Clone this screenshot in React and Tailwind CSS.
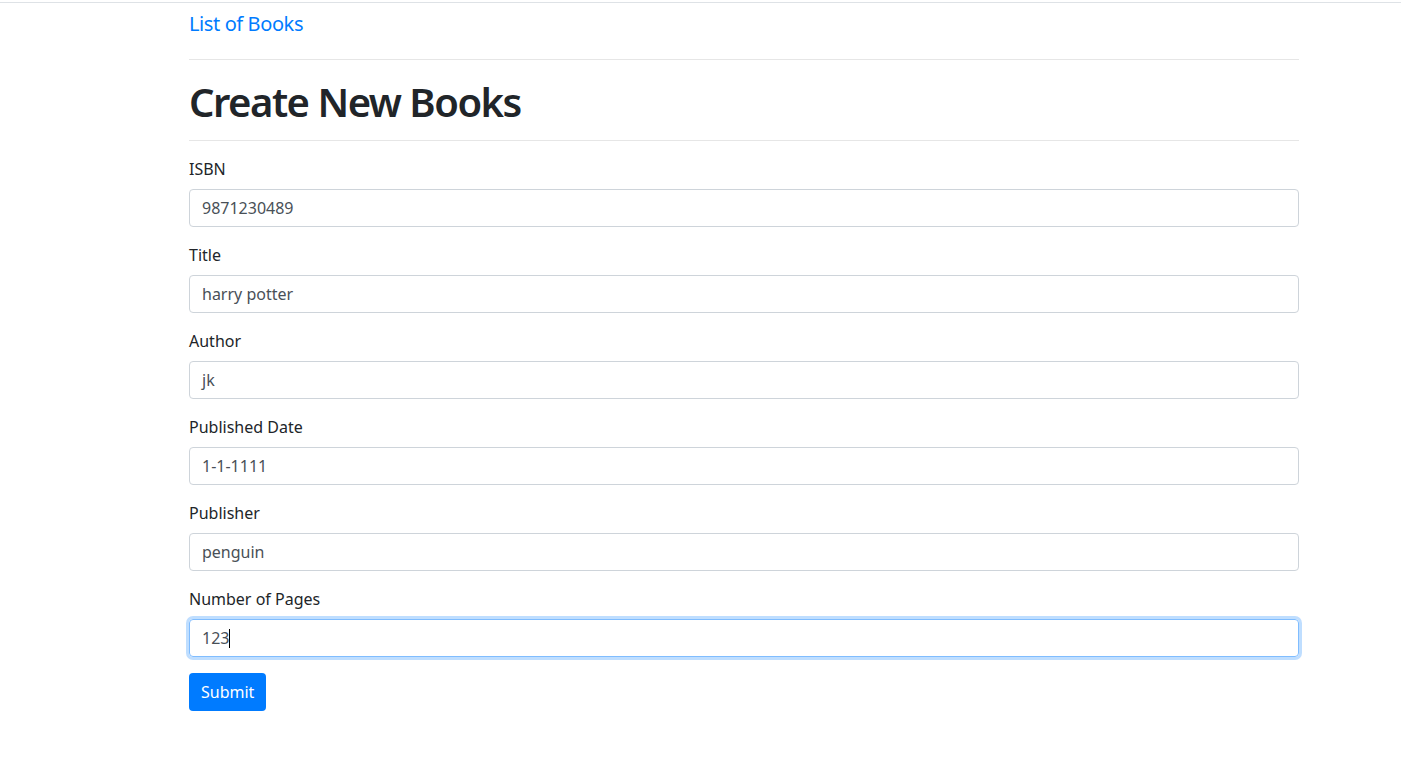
import React from "react";

const fields = [
  { label: "ISBN", value: "9871230489" },
  { label: "Title", value: "harry potter" },
  { label: "Author", value: "jk" },
  { label: "Published Date", value: "1-1-1111" },
  { label: "Publisher", value: "penguin" },
  { label: "Number of Pages", value: "123", focused: true },
];

const App = () => {
  return (
    <div className="min-h-screen bg-white text-[#212529] font-['Noto_Sans','Open_Sans',sans-serif]">
      <div className="h-[2px]" />
      <div className="border-t border-[#dee2e6]" />

      <div className="pl-[189px] w-[1299px]">
        {/* nav link */}
        <div className="pt-[6px] h-[56px]">
          <a href="#" className="text-[20px] leading-[30px] tracking-[-0.4px] text-[#007bff]">
            List of Books
          </a>
        </div>
        <hr className="border-0 border-t border-[#e6e6e6]" />

        <h1 className="mt-[18px] text-[40px] leading-[48px] font-semibold tracking-[-1.5px]">Create New Books</h1>
        <hr className="mt-[14px] border-0 border-t border-[#e6e6e6]" />

        {/* form */}
        <form className="pt-[16px]">
          {fields.map((f) => (
            <div key={f.label} className="mb-[16px]">
              <label className="block text-[16px] leading-[24px] mb-[8px]">{f.label}</label>
              {f.focused ? (
                <div className="h-[38px] px-[12px] flex items-center rounded-[4px] border border-[#80bdff] shadow-[0_0_0_3px_rgba(0,123,255,0.25)] text-[16px] text-[#495057]">
                  {f.value}
                  <span className="inline-block w-px h-[19px] bg-black" />
                </div>
              ) : (
                <div className="h-[38px] px-[12px] flex items-center rounded-[4px] border border-[#ced4da] text-[16px] text-[#495057]">
                  {f.value}
                </div>
              )}
            </div>
          ))}
          <button
            type="button"
            className="h-[38px] px-[12px] rounded-[4px] bg-[#007bff] text-white text-[16px]"
          >
            Submit
          </button>
        </form>
      </div>
    </div>
  );
};

export default App;
